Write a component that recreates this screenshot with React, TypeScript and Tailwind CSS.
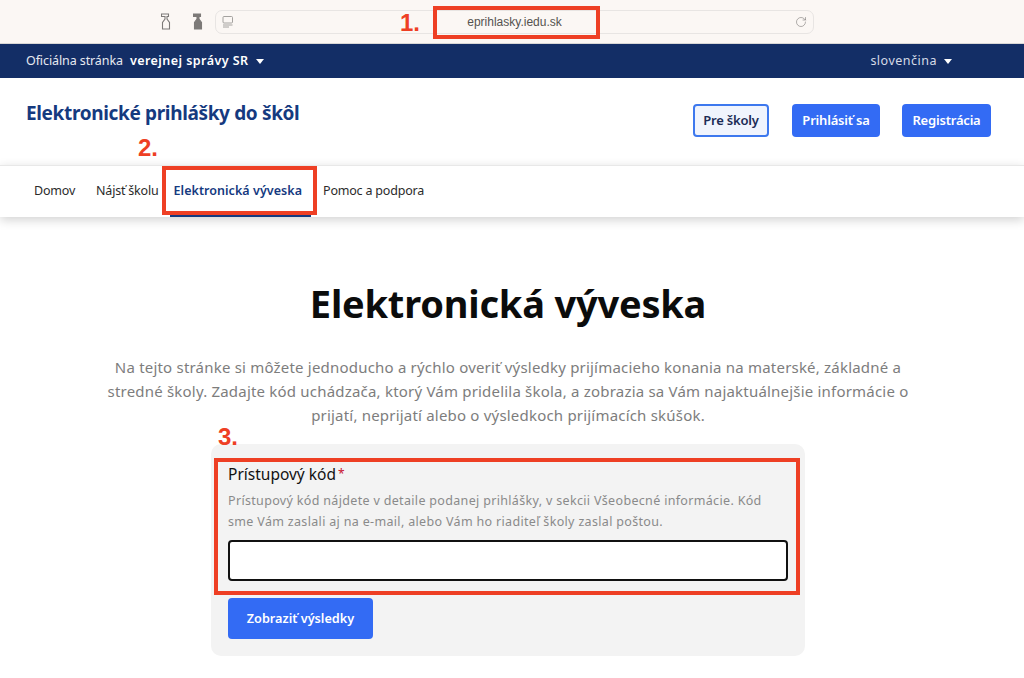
import { RotateCw } from "lucide-react";

function Caret() {
  return <span className="inline-block w-0 h-0 border-x-[4.5px] border-x-transparent border-t-[5px] border-t-white" />;
}

function Bottle({ filled }: { filled?: boolean }) {
  return (
    <svg width="10" height="17" viewBox="0 0 10 17" className="text-[#7d7a78]">
      <path d="M0.5 1h7v2.5H6V6l2.5 3.5V16h-7V9.5L4 6V3.5H0.5z" fill={filled ? "currentColor" : "none"} stroke="currentColor" strokeWidth="1.1" />
    </svg>
  );
}

function BrowserBar() {
  return (
    <div className="h-[44px] bg-[#fbf7f4] border-b border-[#d9d7d6] flex items-center pl-[161px]">
      <div className="flex items-center gap-[22px] w-[54px]">
        <Bottle />
        <Bottle filled />
      </div>
      <div className="h-[24px] w-[599px] border border-[#e8e5e3] rounded-[7px] flex items-center justify-between px-[6px] text-[#9a9795]">
        <svg width="12" height="12" viewBox="0 0 12 12" fill="none" stroke="currentColor" strokeWidth="0.9">
          <rect x="1" y="0.5" width="9.5" height="6.5" rx="1" />
          <path d="M1 9h9.5M1 11h6" />
        </svg>
        <span className="text-[12px] text-[#55534f] font-['Liberation_Sans',sans-serif]">eprihlasky.iedu.sk</span>
        <RotateCw size={12} strokeWidth={1.2} className="text-[#7d7a78]" />
      </div>
    </div>
  );
}

export default function App() {
  return (
    <div className="relative w-[1024px] h-[678px] overflow-hidden bg-white font-['Noto_Sans',sans-serif] text-[#0b0c0c]">
      <BrowserBar />

      {/* Gov strip */}
      <div className="h-[34px] pt-[1px] bg-[#132e66] text-white flex items-center justify-between pl-[26px] pr-[72px] text-[12.5px]">
        <div className="flex items-center gap-[7px]">
          <span className="text-[#e6e9f0] tracking-[-0.1px]">Oficiálna stránka</span>
          <span className="font-semibold tracking-[0.45px]">verejnej správy SR</span>
          <Caret />
        </div>
        <div className="flex items-center gap-[7px] text-[#d6dbe6] tracking-[0.5px]">
          <span>slovenčina</span>
          <Caret />
        </div>
      </div>

      {/* Header */}
      <div className="h-[87px] flex items-start justify-between pl-[26px] pr-[33px]">
        <h1 className="mt-[22px] text-[19px] leading-[26px] font-bold text-[#153a7f] tracking-[-0.35px]">Elektronické prihlášky do škôl</h1>
        <div className="flex gap-[22px] mt-[26px] text-[13px] font-semibold tracking-[-0.2px]">
          <button className="w-[76px] h-[33px] mr-[1px] rounded-[4px] border-2 border-[#3d78ee] bg-[#f0f4fd] text-[#1c2c56]">Pre školy</button>
          <button className="w-[88px] h-[33px] rounded-[4px] bg-[#336bf4] text-white">Prihlásiť sa</button>
          <button className="w-[89px] h-[33px] rounded-[4px] bg-[#336bf4] text-white">Registrácia</button>
        </div>
      </div>

      {/* Nav */}
      <nav className="h-[52px] border-t border-[#e8e8e8] shadow-[0_3px_10px_rgba(0,0,0,0.18)] flex gap-[1px] pl-[24px] text-[12.5px] tracking-[-0.2px] text-[#2b2b2b]">
        <a className="px-[10px] leading-[50px]">Domov</a>
        <a className="px-[10px] leading-[50px]">Nájsť školu</a>
        <a className="pl-[4px] pr-[9px] mr-[1px] leading-[50px] font-semibold tracking-[0.05px] text-[#153a7f] border-b-[3px] border-[#153a7f]">Elektronická výveska</a>
        <a className="px-[10px] leading-[50px]">Pomoc a podpora</a>
      </nav>

      {/* Main */}
      <main className="w-[1016px] flex flex-col items-center">
        <h2 className="mt-[60px] text-[38px] leading-[52px] font-bold text-[#0b0c0c] tracking-[-0.2px]">Elektronická výveska</h2>
        <p className="mt-[26px] w-[830px] text-center text-[15px] leading-[24px] tracking-[0.2px] text-[#7d7d7d]">
          Na tejto stránke si môžete jednoducho a rýchlo overiť výsledky prijímacieho konania na materské, základné a stredné školy. Zadajte kód uchádzača, ktorý Vám pridelila škola, a zobrazia sa Vám najaktuálnejšie informácie o prijatí, neprijatí alebo o výsledkoch prijímacích skúšok.
        </p>
        <section className="mt-[17px] w-[594px] h-[212px] bg-[#f3f3f3] rounded-[10px] px-[17px] pt-[19px]">
          <label className="flex items-start text-[15.5px] leading-[22px] text-[#111]">
            Prístupový kód<span className="text-[#c8102e] text-[12px] leading-[22px] ml-[2px]">*</span>
          </label>
          <p className="mt-[5px] w-[545px] text-[12.5px] leading-[21px] tracking-[0.33px] text-[#8a8a8a]">
            Prístupový kód nájdete v detaile podanej prihlášky, v sekcii Všeobecné informácie. Kód sme Vám zaslali aj na e-mail, alebo Vám ho riaditeľ školy zaslal poštou.
          </p>
          <input className="block mt-[8px] w-[560px] h-[41px] bg-white border-2 border-[#111] rounded-[4px]" />
          <button className="block mt-[17px] w-[145px] h-[41px] rounded-[4px] bg-[#336bf4] text-white text-[12.7px] font-semibold">Zobraziť výsledky</button>
        </section>
      </main>

      {/* Annotations */}
      <div className="absolute left-[433px] top-[6px] w-[167px] h-[33px] border-[4px] border-[#ee3f24]" />
      <div className="absolute left-[162px] top-[166px] w-[155px] h-[49px] border-[4px] border-[#ee3f24]" />
      <div className="absolute left-[214px] top-[458px] w-[586px] h-[137px] border-[4px] border-[#ee3f24]" />
      <span className="absolute left-[400px] top-[9px] text-[24px] leading-[28px] font-bold text-[#ee3f24] font-['Liberation_Sans',sans-serif]">1.</span>
      <span className="absolute left-[138px] top-[134px] text-[24px] leading-[28px] font-bold text-[#ee3f24] font-['Liberation_Sans',sans-serif]">2.</span>
      <span className="absolute left-[218px] top-[423px] text-[24px] leading-[28px] font-bold text-[#ee3f24] font-['Liberation_Sans',sans-serif]">3.</span>
    </div>
  );
}
